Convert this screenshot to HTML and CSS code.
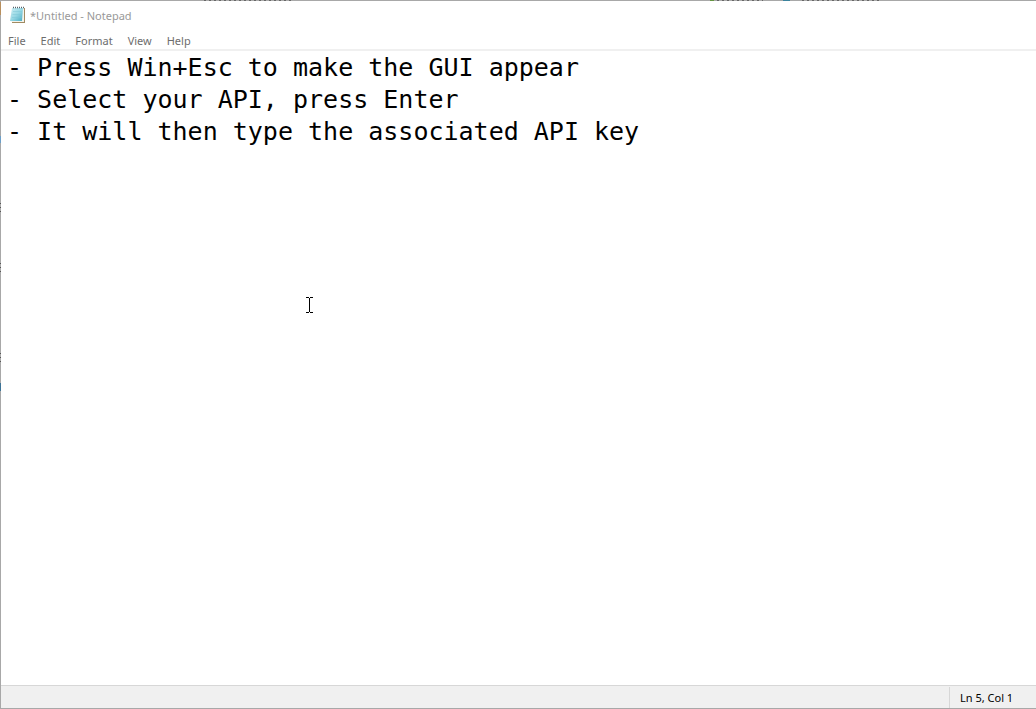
FILE: index.html
```html
<!DOCTYPE html>
<html lang="en">
<head>
<meta charset="utf-8">
<title>*Untitled - Notepad</title>
<link rel="stylesheet" href="styles.css">
</head>
<body>
<main class="window">
  <header class="titlebar">
    <svg class="app-icon" width="18" height="18" viewBox="0 0 18 18" aria-hidden="true">
      <defs>
        <linearGradient id="page" x1="0" y1="0" x2="1" y2="1">
          <stop offset="0" stop-color="#d0f0f5"/>
          <stop offset=".5" stop-color="#98d8e4"/>
          <stop offset="1" stop-color="#4aacc4"/>
        </linearGradient>
      </defs>
      <path d="M4 2H16V17H3V15Z" fill="#a08a62"/>
      <path d="M5 2H15V16H3L2 15Z" fill="#f4f3ea"/>
      <path d="M3 2H14L13 15H1Z" fill="url(#page)"/>
      <path d="M4 5.500H13M3.500 8.500H13M3 11.500H12.500" stroke="#7cc6d6" stroke-width=".5"/>
      <path d="M4 1.500H15" stroke="#56646c" stroke-width="1.500" stroke-dasharray="1 1"/>
    </svg>
    <h1 class="title">*Untitled - Notepad</h1>
  </header>
  <nav class="menubar" aria-label="Menu">
    <button type="button">File</button>
    <button type="button">Edit</button>
    <button type="button">Format</button>
    <button type="button">View</button>
    <button type="button">Help</button>
  </nav>
  <textarea class="editor" aria-label="Text editor" spellcheck="false">- Press Win+Esc to make the GUI appear
- Select your API, press Enter
- It will then type the associated API key

</textarea>
  <footer class="statusbar"><span class="position">Ln 5, Col 1</span></footer>
</main>
<svg class="pointer" width="7" height="16" viewBox="0 0 7 16" shape-rendering="crispEdges" aria-hidden="true">
  <path d="M0 0H3V1H0ZM4 0H7V1H4ZM3 1H4V15H3ZM0 15H3V16H0ZM4 15H7V16H4Z"/>
</svg>
</body>
</html>
```
FILE: styles.css
```css
* {
  box-sizing: border-box;
}

body {
  margin: 0;
  font-family: "Noto Sans", "Open Sans", sans-serif;
  font-size: 11px;
}

.window {
  display: flex;
  flex-direction: column;
  height: 100vh;
  padding: 1px 0 1px 1px;
  background:
    linear-gradient(#3c7396, #3c7396) 0 383px / 1px 8px no-repeat,
    repeating-linear-gradient(#555 0 1px, #aaa 1px 4px) 0 353px / 1px 9px no-repeat,
    repeating-linear-gradient(#555 0 1px, #aaa 1px 4px) 0 263px / 1px 9px no-repeat,
    repeating-linear-gradient(#555 0 1px, #aaa 1px 4px) 0 203px / 1px 9px no-repeat,
    linear-gradient(#6c9fc8, #6c9fc8) 0 136px / 1px 7px no-repeat,
    linear-gradient(#b88f5d, #b88f5d) 0 2px / 1px 13px no-repeat,
    linear-gradient(#3b839d, #3b839d) 783px 0 / 7px 1px no-repeat,
    linear-gradient(#649440, #649440) 710px 0 / 4px 1px no-repeat,
    repeating-linear-gradient(90deg, #666 0 2px, #aaa 2px 5px) 204px 0 / 90px 1px no-repeat,
    repeating-linear-gradient(90deg, #666 0 2px, #aaa 2px 5px) 717px 0 / 46px 1px no-repeat,
    repeating-linear-gradient(90deg, #666 0 2px, #aaa 2px 5px) 802px 0 / 78px 1px no-repeat,
    #a8a8a8;
}

.titlebar {
  display: flex;
  align-items: center;
  gap: 3px;
  height: 30px;
  padding: 0 8px 2px;
  background: #fff;
}

.title {
  margin: 0;
  color: #999;
  font-size: 11px;
  font-weight: 400;
}

.menubar {
  display: flex;
  gap: 1px;
  height: 20px;
  border-bottom: 2px solid #f0f0f0;
  background: #fff;
}

.menubar button {
  padding: 0 7px;
  border: 0;
  background: none;
  color: #6d6d6d;
  font: inherit;
}

.editor {
  flex: 1;
  min-height: 0;
  padding: 1px 6px;
  border: 0;
  outline: 0;
  resize: none;
  background: #fff;
  color: #000;
  font: 25px/32px "DejaVu Sans Mono", monospace;
  overflow: hidden;
}

.statusbar {
  display: flex;
  justify-content: flex-end;
  height: 23px;
  border-top: 1px solid #d7d7d7;
  background: #f0f0f0;
}

.position {
  display: flex;
  align-items: center;
  width: 87px;
  margin-top: 1px;
  padding-left: 10px;
  border-left: 1px solid #d7d7d7;
}

.pointer {
  position: absolute;
  top: 297px;
  left: 306px;
}
```
